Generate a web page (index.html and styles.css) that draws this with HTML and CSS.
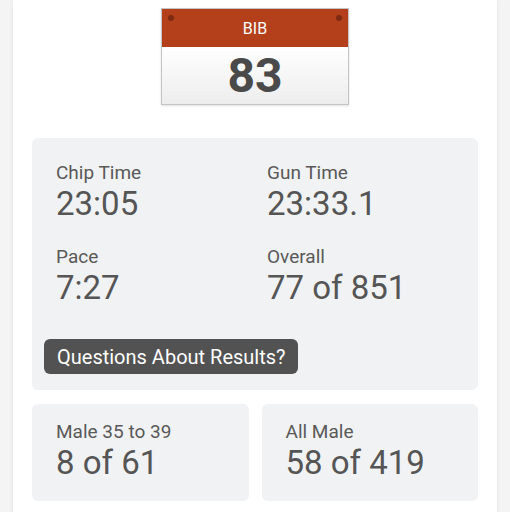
FILE: index.html
```html
<!DOCTYPE html>
<html>
<head>
<meta charset="utf-8">
<link rel="stylesheet" href="styles.css">
</head>
<body>
<div class="card">
  <div class="bib">
    <div class="bib-head">
      <span class="hole hole-l"></span>
      <span class="bib-label">BIB</span>
      <span class="hole hole-r"></span>
    </div>
    <div class="bib-num">83</div>
  </div>

  <div class="panel">
    <div class="stats">
      <div class="stat">
        <div class="label">Chip Time</div>
        <div class="value">23:05</div>
      </div>
      <div class="stat">
        <div class="label">Gun Time</div>
        <div class="value">23:33.1</div>
      </div>
      <div class="stat">
        <div class="label">Pace</div>
        <div class="value">7:27</div>
      </div>
      <div class="stat">
        <div class="label">Overall</div>
        <div class="value">77 of 851</div>
      </div>
    </div>
    <button class="btn">Questions About Results?</button>
  </div>

  <div class="groups">
    <div class="group">
      <div class="label">Male 35 to 39</div>
      <div class="value">8 of 61</div>
    </div>
    <div class="group">
      <div class="label">All Male</div>
      <div class="value">58 of 419</div>
    </div>
  </div>
</div>
</body>
</html>
```

FILE: styles.css
```css
html, body {
  margin: 0;
  padding: 0;
}
body {
  background: #f4f4f4;
  font-family: Roboto, "Noto Sans", Arial, sans-serif;
  color: #555;
  height: 512px;
  overflow: hidden;
}
.card {
  margin: 0 13px;
  background: #fff;
  box-shadow: 0 0 4px rgba(0,0,0,0.08);
  padding: 8px 19px 20px;
  min-height: 520px;
  box-sizing: border-box;
}
.bib {
  width: 186px;
  margin: 0 auto;
  border: 1px solid #c4c4c4;
  box-shadow: 0 1px 2px rgba(0,0,0,0.12);
}
.bib-head {
  position: relative;
  height: 38px;
  background: #b3401b;
  display: flex;
  align-items: center;
  justify-content: center;
}
.bib-label {
  color: #fff;
  font-size: 16px;
  margin-top: 1px;
}
.hole {
  position: absolute;
  top: 6px;
  width: 6px;
  height: 6px;
  border-radius: 50%;
  background: #7e2a12;
}
.hole-l { left: 6px; }
.hole-r { right: 6px; }
.bib-num {
  height: 57px;
  display: flex;
  align-items: center;
  justify-content: center;
  font-size: 48px;
  font-weight: 700;
  color: #4a4a4a;
  background: linear-gradient(#ffffff, #ededed);
}
.panel {
  margin-top: 33px;
  background: #f1f2f4;
  border-radius: 6px;
  padding: 24px 24px 16px;
}
.stats {
  display: grid;
  grid-template-columns: 1fr 1fr;
  column-gap: 24px;
  row-gap: 22px;
}
.label {
  font-size: 19px;
  line-height: 22px;
  color: #595959;
}
.value {
  font-size: 33px;
  line-height: 40px;
  color: #555;
}
.btn {
  margin: 31px 0 0 -12px;
  display: block;
  height: 35px;
  padding: 0 12px 0 13px;
  background: #525252;
  color: #fff;
  border: none;
  border-radius: 6px;
  font-family: Roboto, "Noto Sans", Arial, sans-serif;
  font-size: 20px;
}
.groups {
  margin-top: 14px;
  display: grid;
  grid-template-columns: 1fr 1fr;
  gap: 13px;
}
.group {
  background: #f1f2f4;
  border-radius: 6px;
  padding: 17px 24px 18px;
}
```
